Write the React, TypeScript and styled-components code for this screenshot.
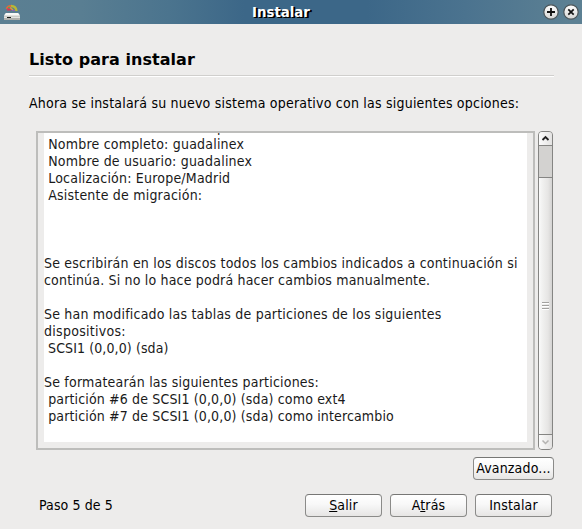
import React from "react";
import styled, { createGlobalStyle } from "styled-components";

const Global = createGlobalStyle`
  * { box-sizing: border-box; }
  body { margin: 0; background: #edeceb; overflow: hidden; }
`;

const Window = styled.main`
  width: 582px;
  height: 529px;
  display: flex;
  flex-direction: column;
  background: #edeceb;
  color: #000;
  font: 14px/17px "DejaVu Sans Condensed", "DejaVu Sans", sans-serif;
  white-space: pre;
`;

const TitleBar = styled.header`
  height: 24px;
  flex: none;
  display: grid;
  grid-template-columns: 52px 1fr 52px;
  align-items: center;
  background: linear-gradient(90deg, #5b7f92 0%, #597e92 14%, #4b748e 29%, #3c6788 42%, #3c6788 63%, #4b738f 80%, #5c8093 98%);
`;

const TitleIcon = styled.svg`
  margin-left: 4px;
  display: block;
`;

const Title = styled.h1`
  margin: 0;
  height: 24px;
  text-align: center;
  color: #fff;
  font: bold 13.33px/26px "DejaVu Sans", sans-serif;
  text-shadow: 1px 1px 0 #000, 2px 1px 0 #000;
  padding-right: 20px;
`;

const Controls = styled.div`
  display: flex;
  gap: 4px;
  margin-left: 13px;
`;

const Content = styled.section`
  padding: 26px 28px 0 29px;
  display: flex;
  flex-direction: column;
`;

const Heading = styled.h2`
  margin: 0;
  height: 27px;
  font: bold 16px/20px "DejaVu Sans", sans-serif;
  letter-spacing: 0.05px;
  border-bottom: 1px solid #fff;
  box-shadow: inset 0 -1px #d0cfcd;
`;

const Intro = styled.p`
  margin: 18px 0 19px;
  letter-spacing: 0.215px;
`;

const SummaryRow = styled.div`
  display: flex;
  height: 319px;
  padding-left: 7px;
  gap: 3px;
`;

const SummaryFrame = styled.div`
  width: 499px;
  border: 2px solid #bdbdbb;
  padding: 0 6px 6px;
`;

const Summary = styled.div`
  background: #fff;
  height: 309px;
  overflow: hidden;
  color: #1a1a1a;
`;

const SummaryText = styled.div`
  margin-top: -14px;
`;

const Line = styled.p<{ $tracking: number }>`
  margin: 0;
  height: 17px;
  letter-spacing: ${(p) => p.$tracking}px;
`;

const Scrollbar = styled.div`
  width: 15px;
  display: flex;
  flex-direction: column;
  border: 1px solid #858583;
  border-radius: 4px;
  overflow: hidden;
  background: #d3d2d0;
`;

const Stepper = styled.div`
  height: 14px;
  flex: none;
  background: linear-gradient(90deg, #fbfbfb, #e4e3e2);
`;

const UpStepper = styled(Stepper)`
  border-bottom: 1px solid #858583;
`;

const Thumb = styled.div`
  height: 259px;
  margin-top: 31px;
  border: solid #858583;
  border-width: 1px 0;
  display: flex;
  align-items: center;
  justify-content: center;
  background: linear-gradient(90deg, #fafafa 0%, #f1f1f0 25%, #e6e5e4 70%, #d4d3d2 100%);
`;

const Button = styled.button<{ $width: number }>`
  width: ${(p) => p.$width}px;
  height: 23px;
  padding: 0 0 1px;
  border: 1px solid #8b8b89;
  border-top-color: #777775;
  border-radius: 4px;
  background: linear-gradient(#fff 0%, #f8f8f8 45%, #e6e5e4 100%);
  color: #000;
  font: inherit;
  line-height: 20px;
  letter-spacing: 0.17px;
`;

const Mnemonic = styled.span`
  text-decoration: underline;
  text-decoration-thickness: 1px;
  text-underline-offset: 1px;
  text-decoration-skip-ink: none;
`;

const AdvancedRow = styled.div`
  display: flex;
  justify-content: flex-end;
  padding: 7px 28px 0 0;
`;

const Footer = styled.footer`
  display: flex;
  align-items: center;
  gap: 8px;
  padding: 14px 30px 0 39px;
`;

const Step = styled.span`
  flex: 1;
  letter-spacing: 0.1px;
`;

const summary: [string, number?][] = [
  [" Distribución del teclado: España", -0.1],
  [" Nombre completo: guadalinex"],
  [" Nombre de usuario: guadalinex"],
  [" Localización: Europe/Madrid"],
  [" Asistente de migración:"],
  [""],
  [""],
  [""],
  ["Se escribirán en los discos todos los cambios indicados a continuación si"],
  ["continúa. Si no lo hace podrá hacer cambios manualmente.", 0.18],
  [""],
  ["Se han modificado las tablas de particiones de los siguientes"],
  ["dispositivos:", 0.28],
  [" SCSI1 (0,0,0) (sda)", 0.1],
  [""],
  ["Se formatearán las siguientes particiones:"],
  [" partición #6 de SCSI1 (0,0,0) (sda) como ext4", 0.15],
  [" partición #7 de SCSI1 (0,0,0) (sda) como intercambio", 0.15],
];

function InstallerIcon() {
  return (
    <TitleIcon width="16" height="16" viewBox="0 0 16 16">
      <path d="M2 9h12l2 2.500V16H0v-4.500z" fill="#e4e4e1" />
      <path d="M2 9h12l1.500 2H.5z" fill="#fafaf8" />
      <path d="M0 14h16v2H0z" fill="#b0b1ad" />
      <path d="M0 12h16v1H0z" fill="#cbccc8" />
      <path d="M3 13.500h4" stroke="#171b17" />
      <path d="M2.500 5Q4 1.500 7 2" stroke="#dc6b3c" strokeWidth="2" fill="none" />
      <path d="M7 2q5 0 5.500 5" stroke="#b8b635" strokeWidth="2.400" fill="none" />
      <path d="M3 5.500h4" stroke="#d93659" strokeWidth="2" />
      <path d="M6 3.500l3 2.500" stroke="#d9a03b" strokeWidth="1.500" />
      <path d="M8 6.500h3" stroke="#9463aa" />
      <path d="M4 3.500h2" stroke="#55a957" />
    </TitleIcon>
  );
}

function Control({ close = false }: { close?: boolean }) {
  return (
    <svg width="16" height="16" viewBox="0 0 16 16">
      <defs>
        <linearGradient id="face" x2="0" y2="1">
          <stop stopColor="#fff" />
          <stop offset="1" stopColor="#d5d5d3" />
        </linearGradient>
      </defs>
      <circle cx="8" cy="8" r="7.2" fill="url(#face)" stroke="#4c5559" strokeWidth="1.2" />
      <path d={close ? "M5.3 5.3l5.4 5.4M10.7 5.3l-5.4 5.4" : "M8 4v8M4 8h8"} stroke="#111" strokeWidth={close ? 1.7 : 1.8} />
    </svg>
  );
}

function Chevron({ down = false }: { down?: boolean }) {
  return (
    <svg width="13" height="14" viewBox="0 0 13 14" display="block">
      <path d={down ? "M3.5 5.5l3 3 3-3" : "M3.5 8l3-3 3 3"} fill="none" stroke={down ? "#b4b3b1" : "#222"} strokeWidth={down ? 1.5 : 1.8} />
    </svg>
  );
}

export default function App() {
  return (
    <>
      <Global />
      <Window>
        <TitleBar>
          <InstallerIcon />
          <Title>Instalar</Title>
          <Controls>
            <Control />
            <Control close />
          </Controls>
        </TitleBar>
        <Content>
          <Heading>Listo para instalar</Heading>
          <Intro>Ahora se instalará su nuevo sistema operativo con las siguientes opciones:</Intro>
          <SummaryRow>
            <SummaryFrame>
              <Summary>
                <SummaryText>
                  {summary.map(([text, tracking = 0.205], i) => (
                    <Line key={i} $tracking={tracking}>{text}</Line>
                  ))}
                </SummaryText>
              </Summary>
            </SummaryFrame>
            <Scrollbar>
              <UpStepper><Chevron /></UpStepper>
              <Thumb>
                <svg width="7" height="8" viewBox="0 0 7 8">
                  <path d="M0 .5h7M0 3.5h7M0 6.5h7" stroke="#a3a2a0" />
                  <path d="M0 1.5h7M0 4.5h7M0 7.5h7" stroke="#fff" />
                </svg>
              </Thumb>
              <Stepper><Chevron down /></Stepper>
            </Scrollbar>
          </SummaryRow>
        </Content>
        <AdvancedRow><Button $width={81}>Avanzado...</Button></AdvancedRow>
        <Footer>
          <Step>Paso 5 de 5</Step>
          <Button $width={77}><Mnemonic>S</Mnemonic>alir</Button>
          <Button $width={77}>A<Mnemonic>t</Mnemonic>rás</Button>
          <Button $width={77}>Instalar</Button>
        </Footer>
      </Window>
    </>
  );
}
